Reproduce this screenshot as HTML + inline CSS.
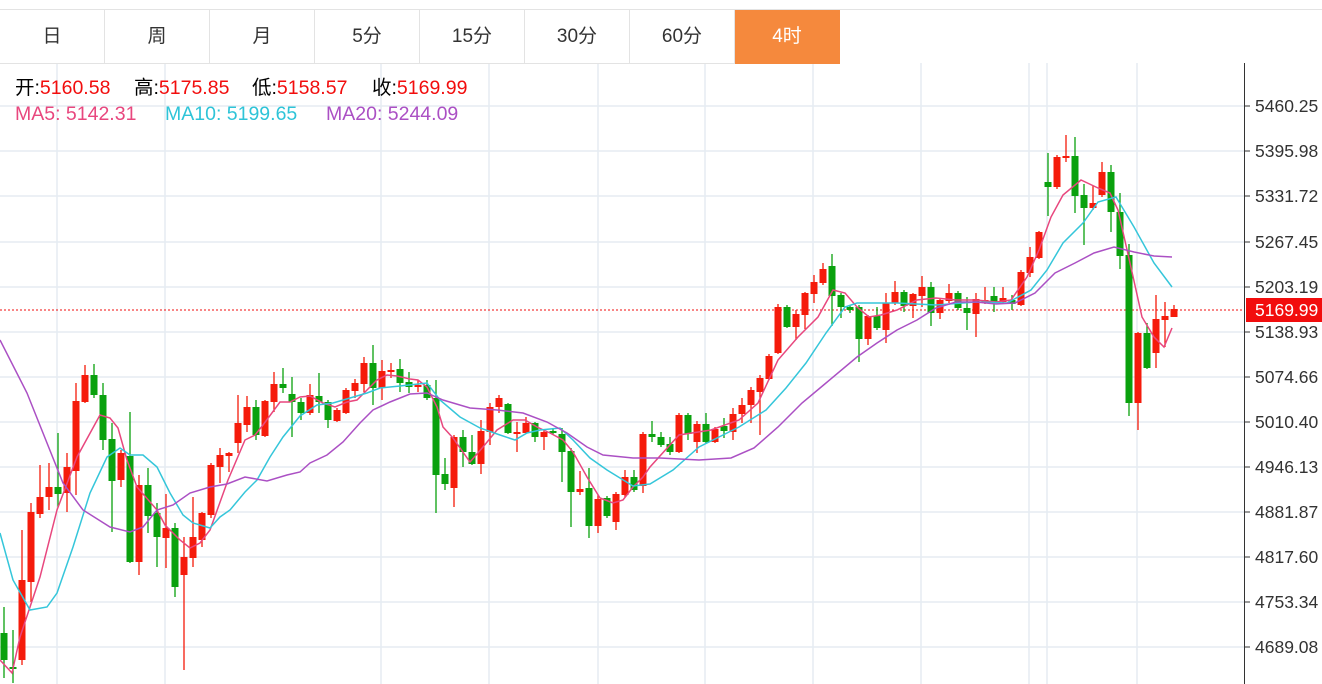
<!DOCTYPE html>
<html><head><meta charset="utf-8"><style>
*{margin:0;padding:0;box-sizing:border-box}
body{width:1322px;height:684px;overflow:hidden;background:#fff;font-family:"Liberation Sans","Noto Sans CJK SC",sans-serif;position:relative}
.tabs{position:absolute;left:0;top:9px;width:1322px;height:54px;border-top:1px solid #e3e3e3}
.tab{position:absolute;top:0;width:105px;height:54px;border-right:1px solid #e3e3e3;border-bottom:1px solid #e3e3e3;text-align:center;line-height:54px;font-size:19px;color:#333}
.tab.on{background:#f5893d;color:#fff;border-color:#f5893d}
.t{position:absolute;font-size:19.5px;white-space:nowrap;line-height:20px}
.r{color:#f20d0d}
.ax{position:absolute;left:1255px;font-size:17.5px;color:#333;line-height:18px}
svg{position:absolute;left:0;top:0}
</style></head><body>
<svg width="1322" height="684" viewBox="0 0 1322 684">
<g stroke="#e5ecf2" stroke-width="1.5">
<line x1="0" y1="106" x2="1244" y2="106"/><line x1="0" y1="151" x2="1244" y2="151"/><line x1="0" y1="196" x2="1244" y2="196"/><line x1="0" y1="242" x2="1244" y2="242"/><line x1="0" y1="287" x2="1244" y2="287"/><line x1="0" y1="332" x2="1244" y2="332"/><line x1="0" y1="377" x2="1244" y2="377"/><line x1="0" y1="422" x2="1244" y2="422"/><line x1="0" y1="467" x2="1244" y2="467"/><line x1="0" y1="512" x2="1244" y2="512"/><line x1="0" y1="557" x2="1244" y2="557"/><line x1="0" y1="602" x2="1244" y2="602"/><line x1="0" y1="647" x2="1244" y2="647"/>
<line x1="57" y1="63" x2="57" y2="684"/><line x1="165" y1="63" x2="165" y2="684"/><line x1="381" y1="63" x2="381" y2="684"/><line x1="489" y1="63" x2="489" y2="684"/><line x1="598" y1="63" x2="598" y2="684"/><line x1="705" y1="63" x2="705" y2="684"/><line x1="813" y1="63" x2="813" y2="684"/><line x1="921" y1="63" x2="921" y2="684"/><line x1="1029" y1="63" x2="1029" y2="684"/><line x1="1047" y1="63" x2="1047" y2="684"/><line x1="1137" y1="63" x2="1137" y2="684"/>
</g>
<line x1="0" y1="310" x2="1244" y2="310" stroke="#f20d0d" stroke-width="1" stroke-dasharray="2,2"/>
<g id="c"></g>
<g fill="none" stroke-width="1.5">
<polyline stroke="#e8477e" points="0,660 12,673 20,637 40,577 57,510 77,457 100,415 110,418 118,428 127,460 137,487 157,510 165,525 180,540 190,548 200,543 210,530 228,480 245,440 255,435 263,425 280,402 290,402 300,397 310,396 323,403 335,407 347,402 357,400 367,390 377,380 387,375 397,376 410,379 418,380 427,387 437,407 443,427 453,438 470,462 483,447 497,430 513,420 525,420 537,427 550,433 563,440 573,452 587,477 600,498 613,503 623,500 633,487 643,477 650,467 679,435 711,430 739,420 758,403 778,360 798,337 818,317 833,290 845,293 857,307 869,317 881,315 897,310 917,300 936,298 956,300 976,300 996,302 1011,300 1027,277 1039,250 1051,217 1063,195 1081,180 1098,188 1110,193 1118,210 1130,263 1142,317 1154,337 1164,347 1172,328"/>
<polyline stroke="#35c6da" points="0,533 13,580 30,610 47,607 57,593 73,547 90,493 107,457 120,448 130,455 143,455 157,467 170,493 183,515 193,523 210,528 220,517 230,510 245,492 257,480 270,457 283,437 300,416 317,405 333,403 350,398 367,393 380,388 400,386 427,383 440,400 460,417 480,428 500,435 515,440 527,433 540,430 560,428 573,440 590,458 607,470 620,478 633,486 650,484 673,470 699,447 739,427 766,410 786,388 806,363 826,333 845,307 857,303 897,303 936,305 976,302 1007,303 1031,290 1047,270 1063,243 1083,223 1098,202 1116,197 1134,227 1154,263 1172,287"/>
<polyline stroke="#ab50c4" points="0,340 27,393 43,433 63,483 83,510 110,527 130,532 143,527 157,510 173,505 190,493 210,487 227,484 245,477 267,481 287,475 300,472 310,463 327,455 343,442 360,423 373,410 390,402 410,394 427,393 443,400 470,408 497,410 523,413 547,422 567,433 587,447 603,455 633,458 660,458 699,460 731,458 754,448 778,427 802,403 826,383 857,357 877,343 897,330 917,320 936,308 956,302 976,302 996,304 1015,303 1035,293 1055,273 1075,263 1094,253 1114,247 1134,252 1154,256 1172,257"/>
</g>
<line x1="1244.5" y1="63" x2="1244.5" y2="684" stroke="#333" stroke-width="1"/>
<g stroke="#333" stroke-width="1">
<line x1="1244" y1="106" x2="1250" y2="106"/><line x1="1244" y1="151" x2="1250" y2="151"/><line x1="1244" y1="196" x2="1250" y2="196"/><line x1="1244" y1="242" x2="1250" y2="242"/><line x1="1244" y1="287" x2="1250" y2="287"/><line x1="1244" y1="332" x2="1250" y2="332"/><line x1="1244" y1="377" x2="1250" y2="377"/><line x1="1244" y1="422" x2="1250" y2="422"/><line x1="1244" y1="467" x2="1250" y2="467"/><line x1="1244" y1="512" x2="1250" y2="512"/><line x1="1244" y1="557" x2="1250" y2="557"/><line x1="1244" y1="602" x2="1250" y2="602"/><line x1="1244" y1="647" x2="1250" y2="647"/>
</g>
<rect x="1246" y="298" width="76" height="24" fill="#f20d0d"/>
</svg>
<script>
var d="g 633 660 607 678|g 667 669 630 683|r 580 660 530 665|r 512 582 503 602|r 497 514 465 518|r 487 497 463 510|g 487 494 433 507|r 467 493 453 512|r 401 471 383 495|r 375 402 365 403|g 375 395 364 398|g 395 440 383 450|g 439 481 423 532|r 453 480 450 487|g 456 562 412 563|r 485 562 475 575|g 485 516 468 533|g 513 537 503 567|r 528 538 494 568|g 528 587 523 597|r 557 575 537 670|r 537 558 497 567|r 513 540 512 547|r 465 515 463 518|r 455 467 448 483|r 453 456 452 472|r 423 443 395 453|r 407 425 396 432|g 407 435 400 440|r 401 436 400 437|r 384 402 372 412|g 384 388 368 393|g 394 402 377 437|g 402 413 398 420|r 395 413 384 415|g 396 402 373 413|g 402 420 400 428|r 410 421 408 422|r 390 413 388 414|r 383 391 379 398|r 363 384 357 392|g 363 388 345 405|r 371 388 360 400|r 370 372 363 378|g 369 383 359 392|g 382 387 372 393|r 385 387 380 392|g 385 398 380 400|g 398 475 380 513|g 474 484 458 490|r 437 488 435 507|g 437 452 430 467|g 452 464 435 465|r 431 464 420 474|r 407 432 403 445|r 398 407 395 413|g 404 433 403 434|r 432 433 422 452|r 423 433 417 434|g 423 437 422 442|r 432 437 430 450|g 431 433 428 435|g 434 452 428 482|g 451 492 448 527|r 489 492 471 495|g 488 526 468 538|r 499 526 495 533|g 498 516 496 518|r 494 522 492 530|r 477 495 470 497|g 477 490 470 492|r 434 486 432 493|g 434 437 421 442|g 437 445 432 447|g 444 452 437 455|r 415 452 413 453|g 415 434 413 440|r 424 442 421 453|g 424 442 413 443|r 429 442 427 443|g 426 431 418 438|r 414 432 408 440|r 405 414 398 423|r 390 405 387 423|r 378 392 375 435|r 356 379 354 380|r 307 353 304 354|g 307 327 305 328|r 314 327 310 340|r 293 315 292 329|r 282 294 275 303|r 269 283 263 285|g 266 296 254 326|g 295 307 293 318|g 307 310 305 313|g 307 339 305 362|r 316 339 315 345|g 316 328 307 330|r 303 330 293 343|r 292 303 281 305|g 292 306 290 312|r 294 306 293 318|r 287 296 276 307|g 287 313 282 326|r 300 313 298 319|r 293 301 284 303|g 293 308 291 310|g 308 313 297 330|r 299 314 293 337|r 300 303 287 304|g 296 302 287 312|r 298 302 287 303|g 300 304 295 310|r 272 305 270 306|r 257 273 247 277|r 232 258 231 259|g 182 187 153 216|r 157 187 155 189|r 156 158 135 162|g 156 196 137 213|g 195 208 184 245|r 203 208 186 210|r 172 195 162 197|g 172 212 165 232|g 212 256 193 269|g 255 403 244 416|r 333 403 332 430|g 333 368 323 369|r 319 353 295 368|r 316 320 302 347|r 309 317 305 317".split("|");
var s="";d.forEach(function(c,i){var a=c.split(" "),x=4+9*i,col=a[0]=="r"?"#f51b0b":"#0aa10e",bt=+a[1],bb=+a[2];if(bb-bt<2)bb=bt+2;
s+='<line x1="'+x+'" y1="'+a[3]+'" x2="'+x+'" y2="'+a[4]+'" stroke="'+col+'" stroke-width="1.3"/><rect x="'+(x-3.5)+'" y="'+bt+'" width="7" height="'+(bb-bt)+'" fill="'+col+'"/>';});
document.getElementById("c").innerHTML=s;
</script>
<div class="tabs">
<div class="tab" style="left:0">日</div><div class="tab" style="left:105px">周</div><div class="tab" style="left:210px">月</div><div class="tab" style="left:315px">5分</div><div class="tab" style="left:420px">15分</div><div class="tab" style="left:525px">30分</div><div class="tab" style="left:630px">60分</div><div class="tab on" style="left:735px">4时</div>
</div>
<div class="t" style="left:15px;top:78px">开:<span class="r">5160.58</span></div>
<div class="t" style="left:134px;top:78px">高:<span class="r">5175.85</span></div>
<div class="t" style="left:252px;top:78px">低:<span class="r">5158.57</span></div>
<div class="t" style="left:372px;top:78px">收:<span class="r">5169.99</span></div>
<div class="t" style="left:15px;top:104px;color:#e8477e">MA5: 5142.31</div>
<div class="t" style="left:165px;top:104px;color:#2ec4d8">MA10: 5199.65</div>
<div class="t" style="left:326px;top:104px;color:#ab50c4">MA20: 5244.09</div>
<div class="ax" style="top:97px">5460.25</div>
<div class="ax" style="top:142px">5395.98</div>
<div class="ax" style="top:187px">5331.72</div>
<div class="ax" style="top:233px">5267.45</div>
<div class="ax" style="top:278px">5203.19</div>
<div class="ax" style="top:301px;color:#fff">5169.99</div>
<div class="ax" style="top:323px">5138.93</div>
<div class="ax" style="top:368px">5074.66</div>
<div class="ax" style="top:413px">5010.40</div>
<div class="ax" style="top:458px">4946.13</div>
<div class="ax" style="top:503px">4881.87</div>
<div class="ax" style="top:548px">4817.60</div>
<div class="ax" style="top:593px">4753.34</div>
<div class="ax" style="top:638px">4689.08</div>
</body></html>
